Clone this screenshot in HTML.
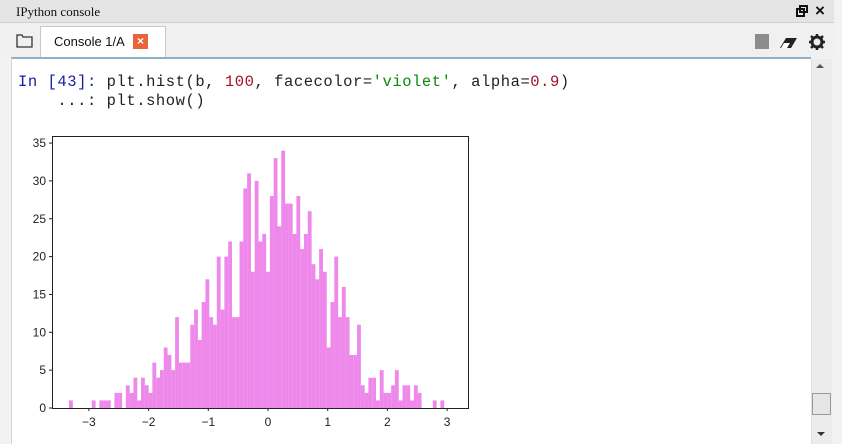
<!DOCTYPE html>
<html><head><meta charset="utf-8"><style>
*{margin:0;padding:0;box-sizing:border-box}
body{width:842px;height:444px;background:#f2f2f2;position:relative;overflow:hidden;font-family:"Liberation Sans",sans-serif}
.title{position:absolute;left:0;top:0;width:834px;height:23px;background:#e4e4e4;border-bottom:1px solid #d0d0d0}
.title span{position:absolute;left:16px;top:4px;font-size:13px;color:#111;font-family:"Liberation Serif",serif}
.tabbar{position:absolute;left:0;top:23px;width:834px;height:34px;background:#f0f0f0}
.tab{position:absolute;left:40px;top:3px;width:126px;height:31px;background:#fff;border:1px solid #c8c8c8;border-bottom:none}
.tab span{position:absolute;left:13px;top:7px;font-size:13px;color:#111}
.cx{position:absolute;left:92px;top:7px;width:15px;height:15px;background:#e8653c;color:#fff;font-size:12px;line-height:15px;text-align:center;font-weight:bold}
.console{position:absolute;left:11px;top:57px;width:800px;height:387px;background:#fff;border-top:2px solid #8fb0c8;border-left:1px solid #cfd6dc}
.code{position:absolute;left:18px;top:73px;font-family:"Liberation Mono",monospace;font-size:15.5px;letter-spacing:0.55px;line-height:19px;color:#222;white-space:pre}
.sb{position:absolute;left:811px;top:59px;width:21px;height:385px;background:#ececec;border-left:1px solid #e0e0e0}
.thumb{position:absolute;left:812px;top:393px;width:19px;height:22px;background:#e6e6e6;border:1px solid #999}
</style></head><body>
<div class="title"><span>IPython console</span>
<svg style="position:absolute;left:796px;top:5px" width="12" height="12"><rect x="1" y="4" width="7" height="7" fill="none" stroke="#111" stroke-width="2"/><rect x="4" y="1" width="7" height="6" fill="none" stroke="#111" stroke-width="2"/></svg>
<span style="left:815px;top:1px;font-size:17px;font-family:'Liberation Sans';font-weight:bold">×</span></div>
<div class="tabbar">
<svg style="position:absolute;left:16px;top:10px" width="18" height="16"><path d="M1 2h5l1 2h9v10H1z" fill="none" stroke="#333" stroke-width="1.3"/></svg>
<div class="tab"><span>Console 1/A</span><div class="cx">×</div></div>
<div style="position:absolute;left:755px;top:11px;width:14px;height:15px;background:#8c8c8c"></div>
<svg style="position:absolute;left:778px;top:11px" width="22" height="16"><path d="M2 14L8 4h11l-6 10z" fill="#222"/><path d="M3 14L6 9h6l-3 5z" fill="#fff"/></svg>
<svg style="position:absolute;left:808px;top:10px" width="18" height="18"><circle cx="9" cy="9" r="5" fill="none" stroke="#222" stroke-width="3"/><path d="M9 1v4M9 13v4M1 9h4M13 9h4M3 3l3 3M12 12l3 3M3 15l3-3M12 6l3-3" stroke="#222" stroke-width="2.5"/></svg>
</div>
<div class="console"></div>
<div class="code"><span style="color:#1a1aa0">In [43]:</span> plt.hist(b, <span style="color:#a0102a">100</span>, facecolor=<span style="color:#0a8a0a">'violet'</span>, alpha=<span style="color:#a0102a">0.9</span>)
    ...: plt.show()</div>
<svg id="ch" style="position:absolute;left:0;top:0" width="842" height="444"></svg>
<div class="sb"></div>
<div style="position:absolute;left:816px;top:64px;width:0;height:0;border-left:4px solid transparent;border-right:4px solid transparent;border-bottom:4px solid #555"></div>
<div class="thumb"></div>
<div style="position:absolute;left:817px;top:432px;width:0;height:0;border-left:4px solid transparent;border-right:4px solid transparent;border-top:4px solid #333"></div>
<script>
var h=[1,0,0,0,0,0,1,0,1,1,1,0,2,2,0,3,2,4,1,4,3,2,6,4,5,8,7,5,12,6,6,6,11,13,9,14,17,12,11,20,13,20,22,12,12,22,29,31,18,30,22,23,18,28,33,24,34,27,27,23,28,21,23,26,19,17,21,18,8,14,20,12,16,12,7,7,11,3,2,4,4,1,5,2,2,3,5,1,3,3,1,3,2,0,0,0,1,0,1];
var s='',w=3.79,u=7.57,y0=408;
for(var i=0;i<h.length;i++){if(h[i])s+='<rect x="'+(69+i*w).toFixed(2)+'" y="'+(y0-h[i]*u).toFixed(2)+'" width="'+(w+0.05).toFixed(2)+'" height="'+(h[i]*u).toFixed(2)+'" fill="#ee88ea"/>';}
s+='<rect x="52.5" y="136.5" width="416" height="272" fill="none" stroke="#222" stroke-width="1"/>';
var t='font-family="Liberation Sans" font-size="12" fill="#222"';
for(var k=0;k<=35;k+=5){var y=y0-k*u;s+='<line x1="49" x2="52" y1="'+y+'" y2="'+y+'" stroke="#222"/><text x="46" y="'+(y+4)+'" text-anchor="end" '+t+'>'+k+'</text>';}
for(var k=-3;k<=3;k++){var x=268+k*59.7;s+='<line x1="'+x+'" x2="'+x+'" y1="408" y2="411" stroke="#222"/><text x="'+x+'" y="426" text-anchor="middle" '+t+'>'+(k<0?'\u2212'+(-k):k)+'</text>';}
document.getElementById('ch').innerHTML=s;
</script>
</body></html>
